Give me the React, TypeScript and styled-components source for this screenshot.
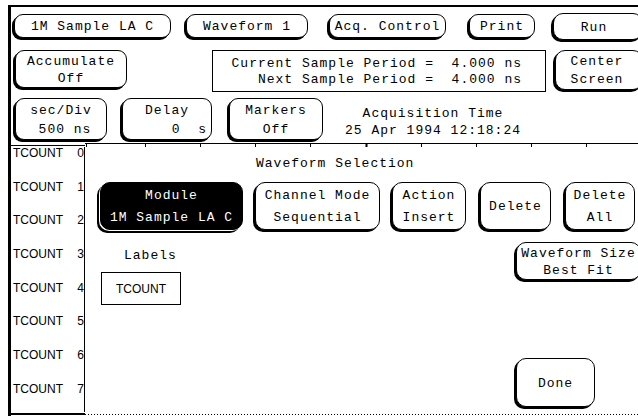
import React from 'react';
import styled, { createGlobalStyle } from 'styled-components';

const GlobalStyle = createGlobalStyle`
  html, body {
    margin: 0;
    padding: 0;
    background: #fff;
  }
`;

const Page = styled.div`
  width: 638px;
  height: 420px;
  overflow: hidden;
  background: #fff;
  box-sizing: border-box;
  padding: 5px 0 0 8px;
  font-family: "Liberation Mono", "DejaVu Sans Mono", monospace;
  font-size: 13px;
  letter-spacing: 1px;
  color: #000;
`;

const Screen = styled.div`
  width: 630px;
  border-top: 2px solid #000;
  border-left: 3px solid #000;
  display: flex;
  flex-direction: column;
`;

const Header = styled.div`
  height: 136px;
  display: flex;
  flex-direction: column;
`;

const Row = styled.div<{ $mt: number; $h: number }>`
  display: flex;
  align-items: flex-start;
  flex: none;
  margin-top: ${p => p.$mt}px;
  height: ${p => p.$h}px;
`;

const SoftKey = styled.div<{
  $w: number;
  $h: number;
  $ml: number;
  $mt?: number;
  $inverted?: boolean;
  $radius?: number;
}>`
  box-sizing: border-box;
  flex: none;
  width: ${p => p.$w}px;
  height: ${p => p.$h}px;
  margin-left: ${p => p.$ml}px;
  margin-top: ${p => p.$mt ?? 0}px;
  padding-top: 2px;
  border: 1px solid #000;
  border-radius: ${p => p.$radius ?? 9}px;
  background: ${p => (p.$inverted ? '#000' : '#fff')};
  color: ${p => (p.$inverted ? '#fff' : '#000')};
  box-shadow: ${p => (p.$inverted ? '-1px 1px 0 #fff, -3px 3px 0 #000' : '-2px 2px 0 #000')};
  display: flex;
  flex-direction: column;
  align-items: center;
  justify-content: space-around;
  white-space: pre;
  line-height: 12px;
`;

const KeyLine = styled.span<{ $right?: number; $shift?: number }>`
  display: block;
  align-self: ${p => (p.$right !== undefined ? 'flex-end' : 'center')};
  padding-right: ${p => p.$right ?? 0}px;
  margin-right: ${p => p.$shift ?? 0}px;
`;

const InfoBox = styled.div`
  box-sizing: border-box;
  flex: none;
  width: 334px;
  height: 42px;
  margin-left: 85px;
  border: 1px solid #000;
  display: flex;
  flex-direction: column;
  align-items: flex-end;
  justify-content: space-evenly;
  padding: 2px 23px 0 0;
  white-space: pre;
  line-height: 12px;
`;

const AcqInfo = styled.div`
  flex: none;
  width: 200px;
  margin-left: 10px;
  margin-top: 7px;
  text-align: center;
  line-height: 17px;
`;

const RulerSvg = styled.svg`
  display: block;
  flex: none;
`;

const Body = styled.div`
  height: 265px;
  display: flex;
`;

const LabelColumn = styled.div`
  width: 73px;
  flex: none;
  border-right: 1px solid #000;
  overflow: hidden;
  font-family: "Liberation Sans", Arial, sans-serif;
  font-size: 12px;
  letter-spacing: 0;
`;

const LabelRow = styled.div`
  height: 33.7px;
  display: flex;
  justify-content: space-between;
  align-items: flex-start;
  padding-left: 2px;
  line-height: 12px;
`;

const Dialog = styled.div`
  flex: 1;
  display: flex;
  flex-direction: column;
  background: #fff;
  overflow: hidden;
`;

const DialogTitle = styled.div`
  margin: 10px 0 0 171px;
  line-height: 14px;
`;

const KeyRow = styled.div`
  display: flex;
  margin-top: 11px;
`;

const Lower = styled.div`
  flex: 1;
  display: flex;
  margin-top: 12px;
`;

const LeftCol = styled.div`
  margin-left: 16px;
  display: flex;
  flex-direction: column;
`;

const SectionLabel = styled.div`
  margin: 7px 0 0 23px;
  line-height: 14px;
`;

const NameBox = styled.div`
  box-sizing: border-box;
  width: 80px;
  height: 33px;
  margin-top: 9px;
  border: 1px solid #000;
  display: flex;
  align-items: center;
  justify-content: center;
  font-family: "Liberation Sans", Arial, sans-serif;
  font-size: 12px;
  letter-spacing: 0;
`;

const RightCol = styled.div`
  margin-left: auto;
  width: 125px;
  display: flex;
  flex-direction: column;
  align-items: flex-start;
  padding-left: 2px;
  padding-bottom: 5px;
`;

const Spacer = styled.div`
  flex: 1;
`;

const BottomEdge = styled.div`
  height: 4px;
  display: flex;
`;

const BottomSolid = styled.div`
  width: 74px;
  flex: none;
  height: 2px;
  margin-top: 1px;
  background: #000;
`;

const BottomDotted = styled.div`
  flex: 1;
  height: 1px;
  margin-top: 2px;
  background: repeating-linear-gradient(90deg, #000 0 1px, transparent 1px 3px);
`;

const tickXs = [86, 145, 200, 255, 310, 366, 421, 476, 531, 586];

function Ruler() {
  return (
    <RulerSvg width={627} height={4} viewBox="0 0 627 4">
      <line x1={0} y1={2.5} x2={74} y2={2.5} stroke="#000" strokeWidth={1} />
      <line x1={74} y1={0.5} x2={627} y2={0.5} stroke="#000" strokeWidth={1} />
      {tickXs.map(x => (
        <line
          key={x}
          x1={x - 11 + 0.5}
          y1={0}
          x2={x - 11 + 0.5}
          y2={4}
          stroke="#000"
          strokeWidth={x === 366 ? 2 : 1}
        />
      ))}
    </RulerSvg>
  );
}

const labels = Array.from({ length: 8 }, (_, i) => i);

export default function App() {
  return (
    <>
      <GlobalStyle />
      <Page>
        <Screen>
          <Header>
            <Row $mt={7} $h={24}>
              <SoftKey $w={157} $h={24} $ml={3}>1M Sample LA C</SoftKey>
              <SoftKey $w={122} $h={24} $ml={15}>Waveform 1</SoftKey>
              <SoftKey $w={117} $h={24} $ml={21}>Acq. Control</SoftKey>
              <SoftKey $w={66} $h={24} $ml={23}>Print</SoftKey>
              <SoftKey $w={90} $h={27} $ml={18} $mt={-1} $radius={10}>
                <KeyLine $shift={8}>Run</KeyLine>
              </SoftKey>
            </Row>
            <Row $mt={12} $h={42}>
              <SoftKey $w={112} $h={38} $ml={4}>
                <KeyLine>Accumulate</KeyLine>
                <KeyLine>Off</KeyLine>
              </SoftKey>
              <InfoBox>
                <span>Current Sample Period =  4.000 ns</span>
                <span>Next Sample Period =  4.000 ns</span>
              </InfoBox>
              <SoftKey $w={88} $h={40} $ml={9} $radius={10}>
                <KeyLine $shift={4}>Center</KeyLine>
                <KeyLine $shift={4}>Screen</KeyLine>
              </SoftKey>
            </Row>
            <Row $mt={6} $h={45}>
              <SoftKey $w={92} $h={42} $ml={4}>
                <KeyLine>sec/Div</KeyLine>
                <KeyLine $shift={-8}>500 ns</KeyLine>
              </SoftKey>
              <SoftKey $w={90} $h={42} $ml={15}>
                <KeyLine>Delay</KeyLine>
                <KeyLine $right={4}>0  s</KeyLine>
              </SoftKey>
              <SoftKey $w={94} $h={42} $ml={17}>
                <KeyLine>Markers</KeyLine>
                <KeyLine>Off</KeyLine>
              </SoftKey>
              <AcqInfo>
                Acquisition Time
                <br />
                25 Apr 1994 12:18:24
              </AcqInfo>
            </Row>
          </Header>
          <Ruler />
          <Body>
            <LabelColumn>
              {labels.map(i => (
                <LabelRow key={i}>
                  <span>TCOUNT</span>
                  <span>{i}</span>
                </LabelRow>
              ))}
            </LabelColumn>
            <Dialog>
              <DialogTitle>Waveform Selection</DialogTitle>
              <KeyRow>
                <SoftKey $w={143} $h={48} $ml={15} $inverted $radius={10}>
                  <KeyLine>Module</KeyLine>
                  <KeyLine>1M Sample LA C</KeyLine>
                </SoftKey>
                <SoftKey $w={125} $h={48} $ml={12} $radius={10}>
                  <KeyLine>Channel Mode</KeyLine>
                  <KeyLine>Sequential</KeyLine>
                </SoftKey>
                <SoftKey $w={74} $h={48} $ml={12} $radius={10}>
                  <KeyLine>Action</KeyLine>
                  <KeyLine>Insert</KeyLine>
                </SoftKey>
                <SoftKey $w={71} $h={48} $ml={14} $radius={10}>
                  Delete
                </SoftKey>
                <SoftKey $w={70} $h={48} $ml={14} $radius={10}>
                  <KeyLine>Delete</KeyLine>
                  <KeyLine>All</KeyLine>
                </SoftKey>
              </KeyRow>
              <Lower>
                <LeftCol>
                  <SectionLabel>Labels</SectionLabel>
                  <NameBox>TCOUNT</NameBox>
                </LeftCol>
                <RightCol>
                  <SoftKey $w={125} $h={38} $ml={0} $radius={10}>
                    <KeyLine>Waveform Size</KeyLine>
                    <KeyLine>Best Fit</KeyLine>
                  </SoftKey>
                  <Spacer />
                  <SoftKey $w={79} $h={49} $ml={0} $radius={10}>
                    Done
                  </SoftKey>
                </RightCol>
              </Lower>
            </Dialog>
          </Body>
          <BottomEdge>
            <BottomSolid />
            <BottomDotted />
          </BottomEdge>
        </Screen>
      </Page>
    </>
  );
}
